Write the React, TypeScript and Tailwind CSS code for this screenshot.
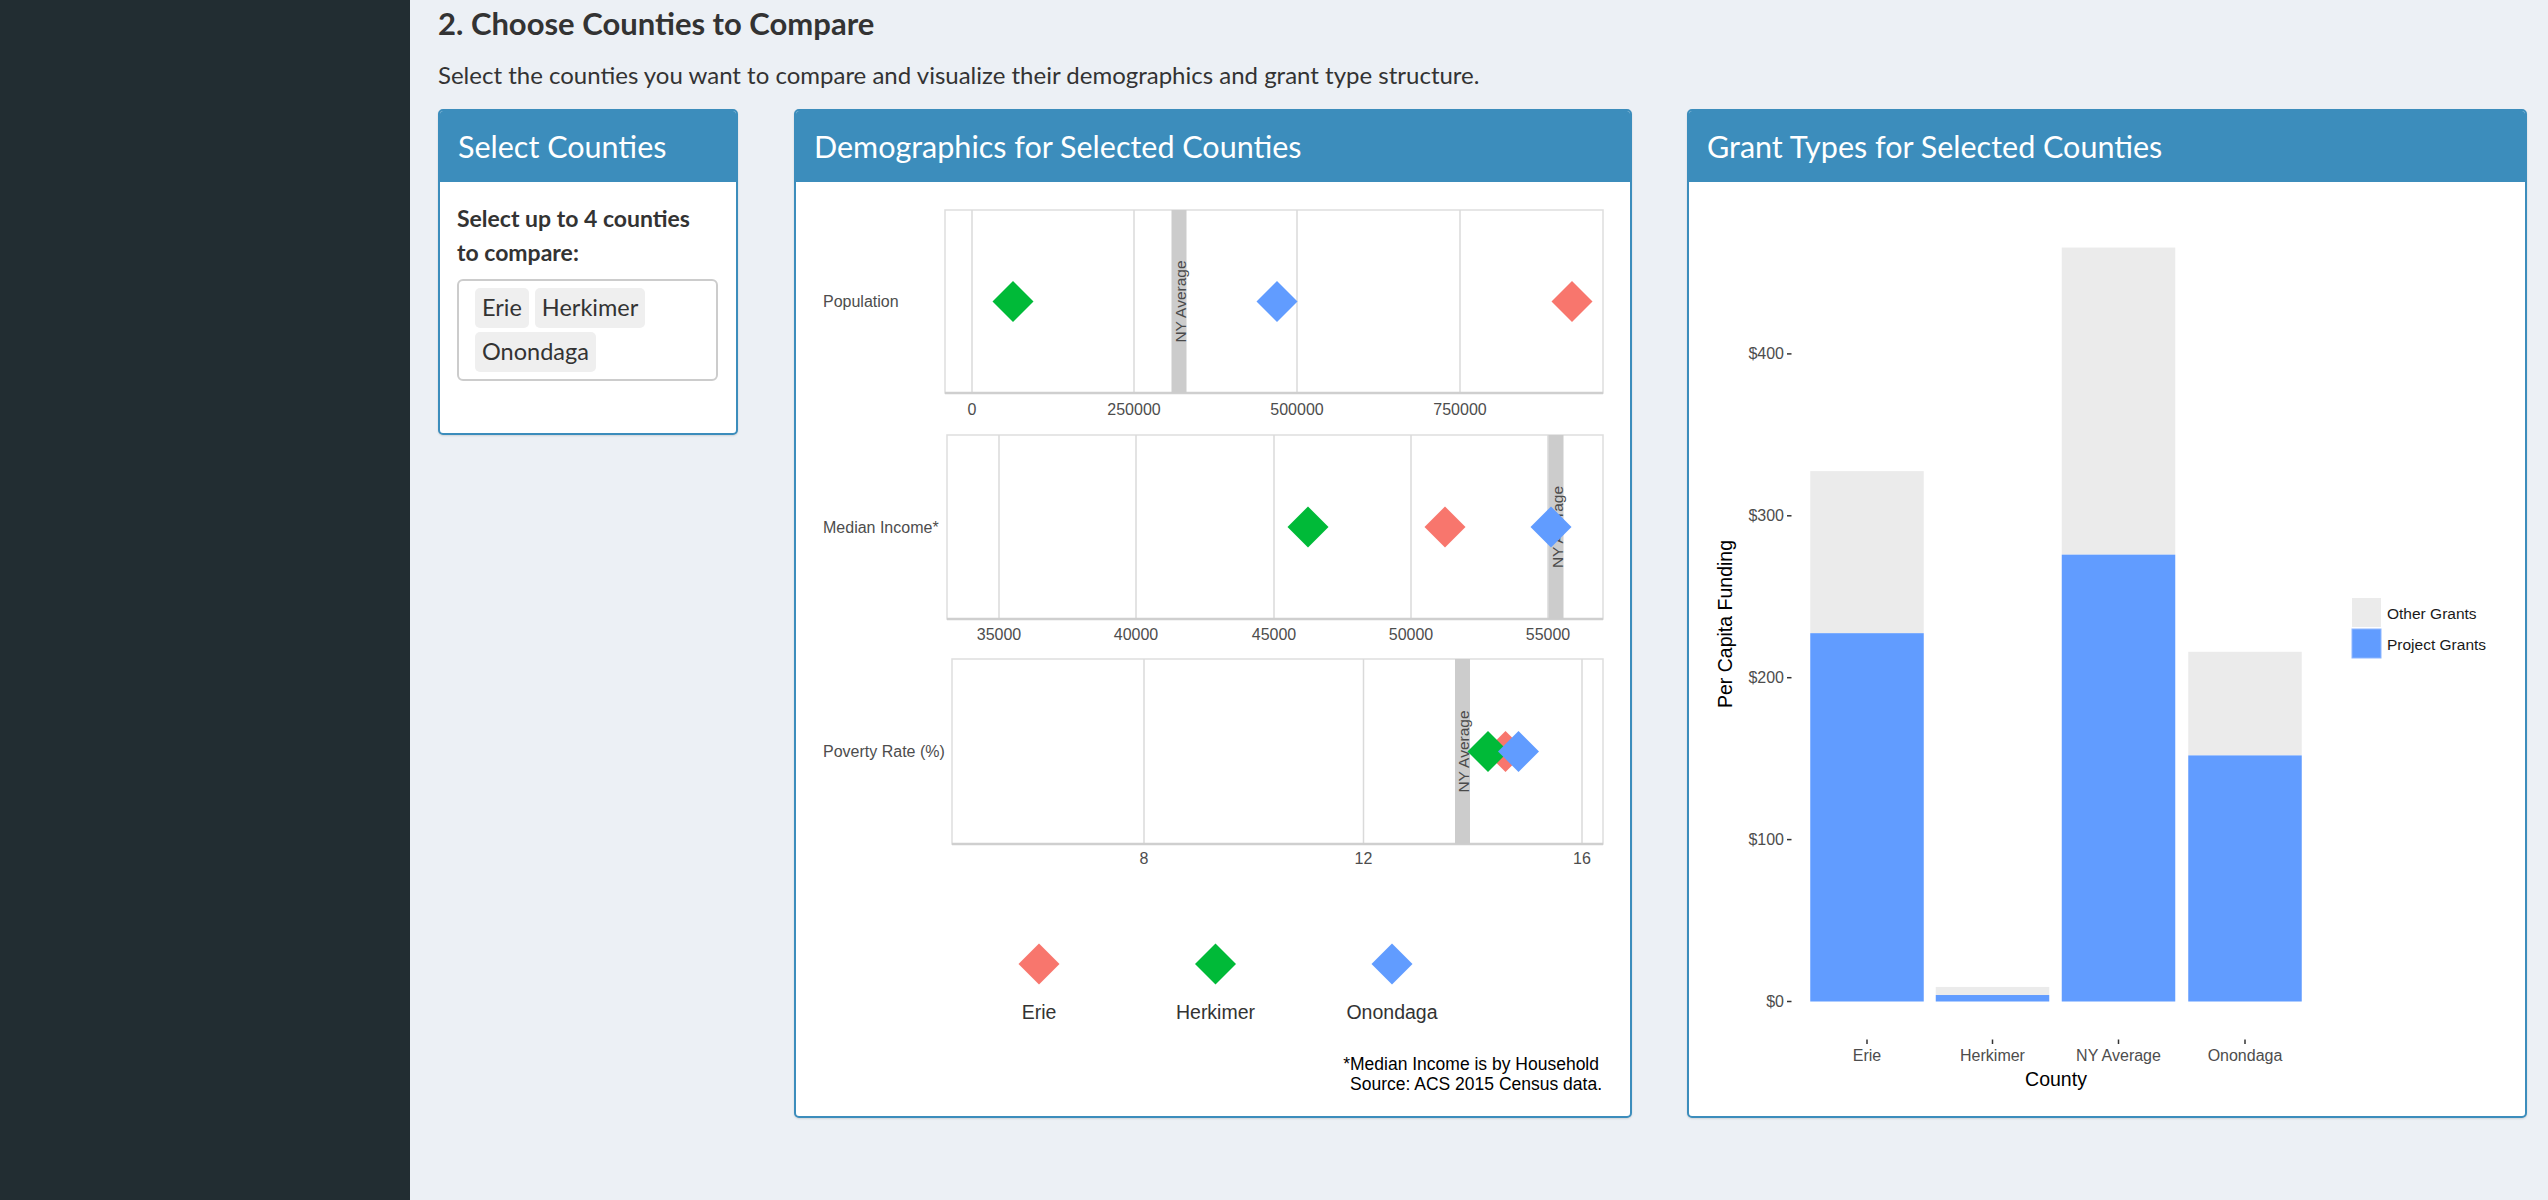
import React from "react";

const RED = "#f8766d";
const GREEN = "#00ba38";
const BLUE = "#619cff";
const PLOT_FONT = "'Liberation Sans', Arial, sans-serif";

function Diamond({ cx, cy, fill, r = 20.5 }: { cx: number; cy: number; fill: string; r?: number }) {
  return <path d={`M${cx},${cy - r} L${cx + r},${cy} L${cx},${cy + r} L${cx - r},${cy} Z`} fill={fill} />;
}

type Panel = {
  label: string;
  x0: number;
  x1: number;
  y0: number;
  y1: number;
  grid: { x: number; t: string }[];
  band: number;
  tickY: number;
  pts: { x: number; c: string }[];
};

const panels: Panel[] = [
  {
    label: "Population",
    x0: 946,
    x1: 1604,
    y0: 210,
    y1: 393,
    grid: [
      { x: 973, t: "0" },
      { x: 1135, t: "250000" },
      { x: 1298, t: "500000" },
      { x: 1461, t: "750000" },
    ],
    band: 1180,
    tickY: 409,
    pts: [
      { x: 1573, c: RED },
      { x: 1014, c: GREEN },
      { x: 1278, c: BLUE },
    ],
  },
  {
    label: "Median Income*",
    x0: 948,
    x1: 1604,
    y0: 435,
    y1: 619,
    grid: [
      { x: 1000, t: "35000" },
      { x: 1137, t: "40000" },
      { x: 1275, t: "45000" },
      { x: 1412, t: "50000" },
      { x: 1549, t: "55000" },
    ],
    band: 1557,
    tickY: 634,
    pts: [
      { x: 1446, c: RED },
      { x: 1309, c: GREEN },
      { x: 1552, c: BLUE },
    ],
  },
  {
    label: "Poverty Rate (%)",
    x0: 953,
    x1: 1604,
    y0: 659,
    y1: 844,
    grid: [
      { x: 1145, t: "8" },
      { x: 1364.5, t: "12" },
      { x: 1583, t: "16" },
    ],
    band: 1463.5,
    tickY: 858,
    pts: [
      { x: 1506.5, c: RED },
      { x: 1489, c: GREEN },
      { x: 1519.5, c: BLUE },
    ],
  },
];

function DemographicsPlot() {
  return (
    <svg width={834} height={934} viewBox="797 182 834 934" style={{ fontFamily: PLOT_FONT }}>
      {panels.map((p, i) => {
        const cy = (p.y0 + p.y1) / 2;
        return (
          <g key={i}>
            <rect x={p.x0} y={p.y0} width={p.x1 - p.x0} height={p.y1 - p.y0} fill="#fff" stroke="#dedede" strokeWidth={1.5} />
            {p.grid.map((g, j) => (
              <line key={j} x1={g.x} x2={g.x} y1={p.y0} y2={p.y1} stroke="#dadada" strokeWidth={1.5} />
            ))}
            <line x1={p.x0} x2={p.x1} y1={p.y1} y2={p.y1} stroke="#cfcfcf" strokeWidth={2.5} />
            <rect x={p.band - 7.5} y={p.y0} width={15} height={p.y1 - p.y0} fill="#cccccc" />
            <text
              x={0}
              y={0}
              transform={`translate(${p.band + 1},${cy}) rotate(-90)`}
              textAnchor="middle"
              dominantBaseline="central"
              fontSize={15.5}
              fill="#4a4a4a"
            >
              NY Average
            </text>
            {p.pts.map((d, j) => (
              <Diamond key={j} cx={d.x} cy={cy} fill={d.c} />
            ))}
            <text x={824} y={cy} dominantBaseline="central" fontSize={16} fill="#4d4d4d">
              {p.label}
            </text>
            {p.grid.map((g, j) => (
              <text key={j} x={g.x} y={p.tickY} textAnchor="middle" dominantBaseline="central" fontSize={16} fill="#4d4d4d">
                {g.t}
              </text>
            ))}
          </g>
        );
      })}
      {[
        { x: 1040, c: RED, t: "Erie" },
        { x: 1216.5, c: GREEN, t: "Herkimer" },
        { x: 1393, c: BLUE, t: "Onondaga" },
      ].map((l, i) => (
        <g key={i}>
          <Diamond cx={l.x} cy={964} fill={l.c} />
          <text x={l.x} y={1012} textAnchor="middle" dominantBaseline="central" fontSize={19.5} fill="#333">
            {l.t}
          </text>
        </g>
      ))}
      <text x={1600} y={1064} textAnchor="end" dominantBaseline="central" fontSize={17.5} fill="#000">
        *Median Income is by Household
      </text>
      <text x={1603} y={1084} textAnchor="end" dominantBaseline="central" fontSize={17.5} fill="#000">
        Source: ACS 2015 Census data.
      </text>
    </svg>
  );
}

const Y0 = 1001.5;
const K = 1.619;
const yv = (v: number) => Y0 - v * K;

const bars = [
  { name: "Erie", cx: 1868, total: 327.6, proj: 227.5 },
  { name: "Herkimer", cx: 1993.5, total: 9, proj: 4 },
  { name: "NY Average", cx: 2119.5, total: 465.7, proj: 276 },
  { name: "Onondaga", cx: 2246, total: 216, proj: 152 },
];

function GrantPlot() {
  const bw = 113.5;
  return (
    <svg width={836} height={934} viewBox="1690 182 836 934" style={{ fontFamily: PLOT_FONT }}>
      {[0, 100, 200, 300, 400].map((v) => (
        <g key={v}>
          <text x={1785} y={yv(v)} textAnchor="end" dominantBaseline="central" fontSize={16} fill="#4d4d4d">
            ${v}
          </text>
          <line x1={1788} x2={1792.5} y1={yv(v)} y2={yv(v)} stroke="#333" strokeWidth={1.5} />
        </g>
      ))}
      {bars.map((b) => (
        <g key={b.name}>
          <rect x={b.cx - bw / 2} y={yv(b.total)} width={bw} height={(b.total - b.proj) * K} fill="#ebebeb" />
          <rect x={b.cx - bw / 2} y={yv(b.proj)} width={bw} height={b.proj * K} fill={BLUE} />
          <line x1={b.cx} x2={b.cx} y1={1039.5} y2={1044} stroke="#333" strokeWidth={1.5} />
          <text x={b.cx} y={1055} textAnchor="middle" dominantBaseline="central" fontSize={16} fill="#4d4d4d">
            {b.name}
          </text>
        </g>
      ))}
      <text x={2057} y={1079} textAnchor="middle" dominantBaseline="central" fontSize={19.5} fill="#000">
        County
      </text>
      <text
        x={0}
        y={0}
        transform="translate(1726,624) rotate(-90)"
        textAnchor="middle"
        dominantBaseline="central"
        fontSize={19.5}
        fill="#000"
      >
        Per Capita Funding
      </text>
      <rect x={2353} y={598} width={29} height={29} fill="#ebebeb" />
      <rect x={2353} y={629} width={29} height={29} fill={BLUE} stroke="#8db6ff" strokeWidth={1} />
      <text x={2388} y={613} dominantBaseline="central" fontSize={15.5} fill="#1a1a1a">
        Other Grants
      </text>
      <text x={2388} y={644} dominantBaseline="central" fontSize={15.5} fill="#1a1a1a">
        Project Grants
      </text>
    </svg>
  );
}

function Box({ title, className, children }: { title: string; className: string; children: React.ReactNode }) {
  return (
    <div className={`flex flex-col overflow-hidden rounded-[5px] border-2 border-[#3c8dbc] bg-white shadow-[0_1px_2px_rgba(0,0,0,0.12)] ${className}`}>
      <div className="flex h-[71px] shrink-0 items-center bg-[#3c8dbc] pl-[18px] text-[30.5px] text-white">{title}</div>
      <div className="flex-1">{children}</div>
    </div>
  );
}

export default function App() {
  return (
    <div className="flex h-[1200px] w-[2548px] overflow-hidden" style={{ fontFamily: "Lato, 'Open Sans', sans-serif" }}>
      <aside className="w-[410px] shrink-0 bg-[#222d32]" />
      <main className="flex-1 bg-[#ecf0f5] pl-[28px]">
        <h3 className="mt-[4px] h-[38px] text-[31px] font-bold leading-[38px] text-[#333]">2. Choose Counties to Compare</h3>
        <p className="mt-[17px] h-[32px] text-[24px] leading-[32px] text-[#333]">
          Select the counties you want to compare and visualize their demographics and grant type structure.
        </p>
        <div className="mt-[18px] flex items-start">
          <Box title="Select Counties" className="h-[326px] w-[300px]">
            <div className="px-[17px] pt-[19px]">
              <div className="w-[245px] text-[23px] font-bold leading-[34px] text-[#333]">Select up to 4 counties to compare:</div>
              <div className="mt-[10px] flex h-[102px] w-[261px] flex-wrap content-start gap-x-[6px] gap-y-[4px] rounded-[6px] border-2 border-[#cccccc] pl-[16px] pr-[10px] pt-[7px]">
                {["Erie", "Herkimer", "Onondaga"].map((c) => (
                  <span key={c} className="flex h-[40px] items-center rounded-[5px] bg-[#efefef] px-[7px] text-[23.5px] text-[#333]">
                    {c}
                  </span>
                ))}
              </div>
            </div>
          </Box>
          <Box title="Demographics for Selected Counties" className="ml-[56px] h-[1009px] w-[838px]">
            <DemographicsPlot />
          </Box>
          <Box title="Grant Types for Selected Counties" className="ml-[55px] h-[1009px] w-[840px]">
            <GrantPlot />
          </Box>
        </div>
      </main>
    </div>
  );
}
